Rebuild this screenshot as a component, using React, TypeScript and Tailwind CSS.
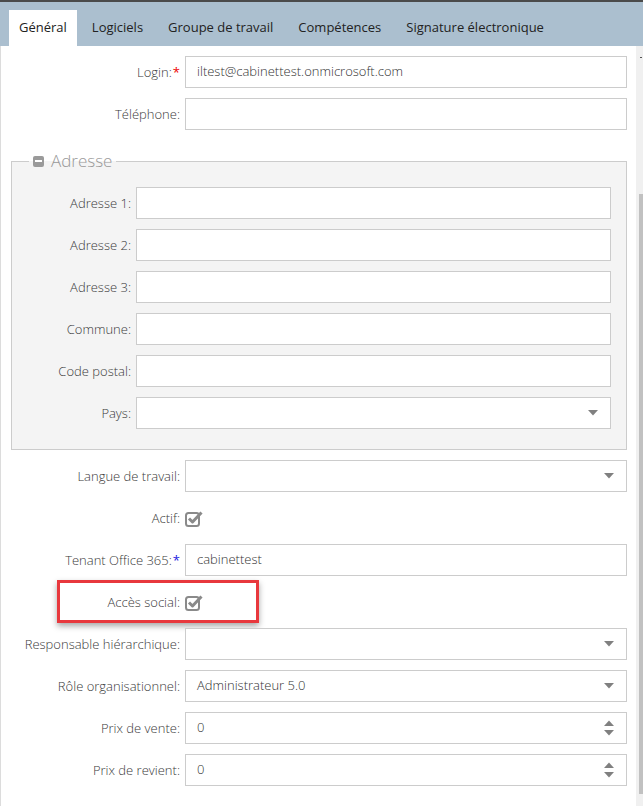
import React from 'react';

const tabs = ['Général', 'Logiciels', 'Groupe de travail', 'Compétences', 'Signature électronique'];

const CheckIcon = () => (
  <svg width="18" height="17" viewBox="0 0 18 17" fill="none">
    <rect x="1" y="3" width="13" height="13" rx="2.5" stroke="#8a8a8a" strokeWidth="2" />
    <path d="M4 8.5 L7.5 12 L16.5 2.5" stroke="#8a8a8a" strokeWidth="3" strokeLinejoin="round" />
  </svg>
);

const Caret = () => (
  <svg width="10" height="6" viewBox="0 0 10 6" className="mr-[12px]">
    <path d="M0 0 H10 L5 5.5 Z" fill="#808080" />
  </svg>
);

const Spinner = () => (
  <div className="flex flex-col gap-[4px] mr-[12px]">
    <svg width="10" height="6" viewBox="0 0 10 6">
      <path d="M0 6 H10 L5 0.5 Z" fill="#808080" />
    </svg>
    <svg width="10" height="6" viewBox="0 0 10 6">
      <path d="M0 0 H10 L5 5.5 Z" fill="#808080" />
    </svg>
  </div>
);

type Kind = 'text' | 'select' | 'number' | 'check';

interface RowProps {
  label: string;
  value?: string;
  kind?: Kind;
  req?: 'red' | 'blue';
  labelW?: string;
  highlight?: boolean;
}

const Row: React.FC<RowProps> = ({ label, value = '', kind = 'text', req, labelW = 'w-[179px]', highlight }) => (
  <div className="relative flex items-center h-[32px] mb-[10px]">
    <div className={`${labelW} shrink-0 text-right text-[13px] text-[#3a3a3a] leading-none`}>
      {label}:
      {req === 'red' && <span className="text-[#e00] ml-[1px] font-normal">*</span>}
      {req === 'blue' && <span className="text-[#1a1ae0] ml-[1px] font-normal">*</span>}
    </div>
    {kind === 'check' ? (
      <div className="ml-[5px] flex items-center">
        <CheckIcon />
      </div>
    ) : (
      <div className="ml-[5px] flex-1 h-[32px] bg-white border border-[#cccccc] flex items-center">
        <span className="flex-1 pl-[11px] text-[13px] text-[#333]">{value}</span>
        {kind === 'select' && <Caret />}
        {kind === 'number' && <Spinner />}
      </div>
    )}
    {highlight && (
      <div className="absolute left-[56px] top-[-6px] w-[202px] h-[43px] border-[3px] border-[#e8383d] shadow-[0_3px_6px_rgba(0,0,0,0.35)]" />
    )}
  </div>
);

export default function App() {
  return (
    <div
      className="w-[643px] h-[806px] overflow-hidden bg-white font-light"
      style={{ fontFamily: '"Open Sans", "Liberation Sans", sans-serif' }}
    >
      <div className="h-[2px] bg-[#4b4b4b]" />
      <div className="h-[44px] bg-[#abbfcf] pt-[8px] pl-[9px] flex items-end">
        {tabs.map((t, i) => (
          <div
            key={t}
            className={`h-[36px] flex items-center px-[10px] mr-[5px] text-[13px] text-[#222] font-normal ${i === 0 ? 'bg-white' : ''}`}
          >
            {t}
          </div>
        ))}
      </div>
      <div className="flex h-[760px]">
        <div className="flex-1 border-l border-[#dcdcdc] pt-[10px] pr-[9px]">
          <Row label="Login" req="red" value="iltest@cabinettest.onmicrosoft.com" />
          <Row label="Téléphone" />

          <fieldset className="ml-[10px] mt-[20px] mb-[10px] border border-[#cccccc] bg-[#f4f4f4] pb-[10px] pr-[15px]">
            <legend className="ml-[17px] px-[4px] flex items-center text-[17px] text-[#999] leading-[22px]">
              <span className="w-[11px] h-[11px] rounded-[2px] bg-[#9a9a9a] flex items-center justify-center mr-[7px]">
                <span className="w-[7px] h-[2px] bg-white" />
              </span>
              Adresse
            </legend>
            <div className="pt-[15px]">
              <Row label="Adresse 1" labelW="w-[119px]" />
              <Row label="Adresse 2" labelW="w-[119px]" />
              <Row label="Adresse 3" labelW="w-[119px]" />
              <Row label="Commune" labelW="w-[119px]" />
              <Row label="Code postal" labelW="w-[119px]" />
              <Row label="Pays" labelW="w-[119px]" kind="select" />
            </div>
          </fieldset>

          <Row label="Langue de travail" kind="select" />
          <Row label="Actif" kind="check" />
          <Row label="Tenant Office 365" req="blue" value="cabinettest" />
          <Row label="Accès social" kind="check" highlight />
          <Row label="Responsable hiérarchique" kind="select" />
          <Row label="Rôle organisationnel" kind="select" value="Administrateur 5.0" />
          <Row label="Prix de vente" kind="number" value="0" />
          <Row label="Prix de revient" kind="number" value="0" />
        </div>
        <div className="w-[7px] bg-[#f0f0f0] flex flex-col items-end">
          <div className="h-[1px] w-[2px] bg-[#555] mt-[11px] mr-[1px]" />
          <div className="w-[4px] h-[600px] bg-[#c1c1c1] mt-[136px]" />
        </div>
      </div>
    </div>
  );
}
